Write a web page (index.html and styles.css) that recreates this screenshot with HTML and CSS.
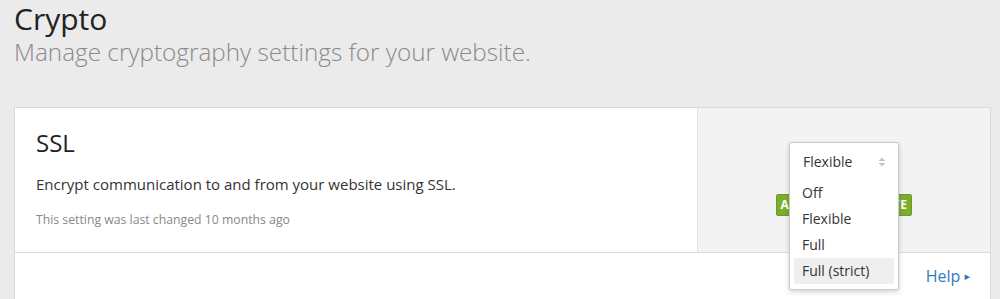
FILE: index.html
```html
<!DOCTYPE html>
<html>
    <head>
        <title>Crypto</title>
        <link rel="stylesheet" href="styles.css">
    </head>
    <body>
        <header class="page-head">
            <h1>Crypto</h1>
            <p class="lead">Manage cryptography settings for your website.</p>
        </header>
        <section class="card">
            <div class="card-main">
                <div class="card-body">
                    <h2>SSL</h2>
                    <p class="desc">Encrypt communication to and from your website using SSL.</p>
                    <p class="meta">This setting was last changed 10 months ago</p>
                </div>
                <div class="card-control">
                    <div class="select">
                        <div class="select-open">
                            <div class="select-value">
                                <span>Flexible</span>
                                <svg class="arrows" width="8" height="10" viewBox="0 0 8 10">
                                    <path d="M4 0.5 L7.5 4 L0.5 4 Z" fill="#c4c4c4"/>
                                    <path d="M4 9.5 L7.5 6 L0.5 6 Z" fill="#c4c4c4"/>
                                </svg>
                            </div>
                            <ul class="options">
                                <li>Off</li>
                                <li>Flexible</li>
                                <li>Full</li>
                                <li class="hover">Full (strict)</li>
                            </ul>
                        </div>
                    </div>
                    <span class="badge">ACTIVE CERTIFICATE</span>
                </div>
            </div>
            <div class="card-foot">
                <a href="#" class="help">Help <span class="caret">&#9656;</span></a>
            </div>
        </section>
    </body>
</html>
```

FILE: styles.css
```css
html {
    background: #ebebeb;
    font-family: "Open Sans", "DejaVu Sans", sans-serif;
    color: #333;
}

body {
    margin: 0;
    overflow: hidden;
}

.page-head {
    padding: 0 14px;
}

    .page-head h1 {
        margin: 0;
        font-size: 30px;
        font-weight: 400;
        line-height: 38px;
        color: #222;
    }

    .page-head .lead {
        margin: -1px 0 0;
        font-size: 24.3px;
        font-weight: 300;
        line-height: 30px;
        color: #8a8a8a;
    }

.card {
    margin: 40px 0 0 14px;
    width: 975px;
    background: #fff;
    border: 1px solid #dcdcdc;
}

.card-main {
    display: flex;
    height: 144px;
    border-bottom: 1px solid #dcdcdc;
}

.card-body {
    width: 661px;
    padding: 0 0 0 21px;
    border-right: 1px solid #e2e2e2;
}

    .card-body h2 {
        margin: 19px 0 0;
        font-size: 24px;
        font-weight: 400;
        line-height: 32px;
        color: #222;
    }

    .card-body .desc {
        margin: 14px 0 0;
        font-size: 15px;
        line-height: 22px;
        color: #333;
    }

    .card-body .meta {
        margin: 15px 0 0;
        font-size: 12.25px;
        line-height: 20px;
        color: #888;
    }

.card-control {
    flex: 1;
    padding-bottom: 2px;
    background: #f3f3f3;
    display: flex;
    flex-direction: column;
    align-items: center;
    justify-content: center;
}

.select {
    position: relative;
    width: 110px;
    height: 34px;
}

    .select-open {
        position: absolute;
        top: 0;
        left: 0;
        width: 108px;
        background: #fff;
        border: 1px solid #c8c8c8;
        border-radius: 2px;
        box-shadow: 0 2px 5px rgba(0, 0, 0, .18);
        z-index: 2;
    }

    .select-value {
        display: flex;
        align-items: center;
        justify-content: space-between;
        height: 37px;
        padding: 0 12px 0 13px;
        font-size: 14px;
        color: #333;
    }

    .options {
        list-style: none;
        margin: 0;
        padding: 0 4px 5px;
    }

    .options li {
        height: 26px;
        line-height: 25px;
        padding-left: 8px;
        font-size: 14px;
        color: #333;
    }

    .options li.hover {
        background: #efefef;
    }

.badge {
    margin-top: 18px;
    height: 20px;
    padding: 0 4px;
    line-height: 20px;
    background: #7aae2c;
    border: 1px solid #6b9a27;
    border-radius: 2px;
    color: #fff;
    font-size: 12px;
    font-weight: 700;
    letter-spacing: .5px;
    white-space: nowrap;
}

.card-foot {
    height: 60px;
    padding: 12px 20px 0 0;
    text-align: right;
}

    .card-foot .help {
        color: #2f7bbd;
        text-decoration: none;
        font-size: 16px;
    }

    .card-foot .caret {
        font-size: 11px;
        vertical-align: 2px;
    }
```
